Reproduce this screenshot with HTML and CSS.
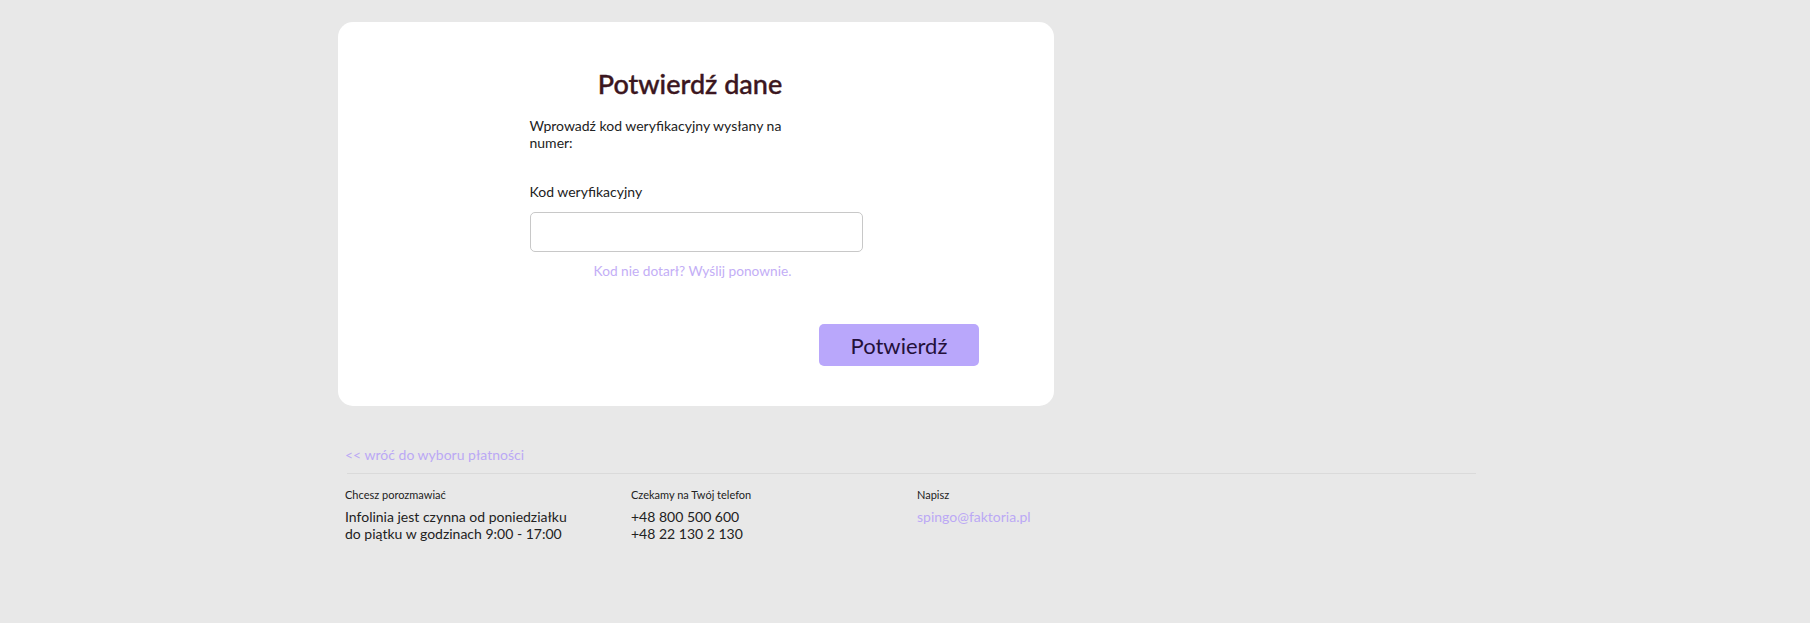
FILE: index.html
```html
<!doctype html>
<html lang="pl">
<head>
	<meta charset="UTF-8">
	<title>Potwierdź dane</title>
	<link rel="stylesheet" href="styles.css">
</head>
<body>
	<div class="page">
		<!-- karta z formularzem -->
		<div class="card">
			<div class="form">
				<h1 class="title">Potwierdź dane</h1>
				<p class="desc">Wprowadź kod weryfikacyjny wysłany na numer:</p>
				<label class="label" for="code">Kod weryfikacyjny</label>
				<input class="input" id="code" type="text">
				<a class="resend" href="#">Kod nie dotarł? Wyślij ponownie.</a>
			</div>
			<div class="actions">
				<button class="btn" type="button">Potwierdź</button>
			</div>
		</div>

		<!-- stopka -->
		<div class="footer">
			<a class="back" href="#">&lt;&lt; wróć do wyboru płatności</a>
			<div class="line"></div>
			<div class="cols">
				<div class="col">
					<div class="col-head">Chcesz porozmawiać</div>
					<div class="col-text">Infolinia jest czynna od poniedziałku<br>do piątku w godzinach 9:00 - 17:00</div>
				</div>
				<div class="col">
					<div class="col-head">Czekamy na Twój telefon</div>
					<div class="col-text">+48 800 500 600<br>+48 22 130 2 130</div>
				</div>
				<div class="col">
					<div class="col-head">Napisz</div>
					<div class="col-text"><a class="mail" href="#">spingo@faktoria.pl</a></div>
				</div>
				<div class="col"></div>
			</div>
		</div>
	</div>
</body>
</html>
```

FILE: styles.css
```css
html,body,div,h1,p{
	margin:0; padding:0;
}
html{
	background:#e8e8e8;
}
body{
	font-family:Lato,"Liberation Sans",sans-serif; color:#222; padding:22px 0 60px 6px;
}
a{ text-decoration:none; }
.page{
	width:1140px; margin:0 auto;
}
.card{
	width:716px; background:#fff; border-radius:15px; padding:45px 0 40px; box-sizing:border-box;
}
.form{
	width:333px; margin:0 auto; display:flex; flex-direction:column;
}
.title{
	padding-right:12px; font-size:27px; line-height:34px; font-weight:500; color:#3b1620; text-align:center; -webkit-text-stroke:0.4px #3b1620;
}
.desc{
	width:275px; margin-top:16px; font-size:14px; line-height:17px; color:#222;
}
.label{
	margin-top:32px; font-size:14px; line-height:17px; color:#222;
}
.input{
	margin-top:12px; height:40px; box-sizing:border-box; border:1px solid #c8c8c8; border-radius:5px; font:inherit; outline:none;
}
.resend{
	margin-top:11px; padding-right:7px; font-size:13.7px; line-height:16px; color:#c3aef6; text-align:center;
}
.actions{
	width:566px; margin:45px auto 0; display:flex; justify-content:flex-end;
}
.btn{
	width:160px; height:42px; border:0; border-radius:5px; background:#b9a7fb; color:#24103a; font-family:Lato,"Liberation Sans",sans-serif; font-size:22px; padding:0;
}
.footer{
	margin-top:41px; padding:0 2px 0 7px;
}
.back{
	display:block; font-size:14px; line-height:16px; color:#bba8f5;
}
.line{
	height:1px; background:#dadada; margin:10px 0 0 2px;
}
.cols{
	display:grid; grid-template-columns:repeat(4,286px); margin-top:14px;
}
.col-head{
	font-size:11px; line-height:14px; color:#222;
}
.col-text{
	margin-top:6px; font-size:14px; line-height:17px; color:#222;
}
.mail{
	color:#bba8f5;
}
```
